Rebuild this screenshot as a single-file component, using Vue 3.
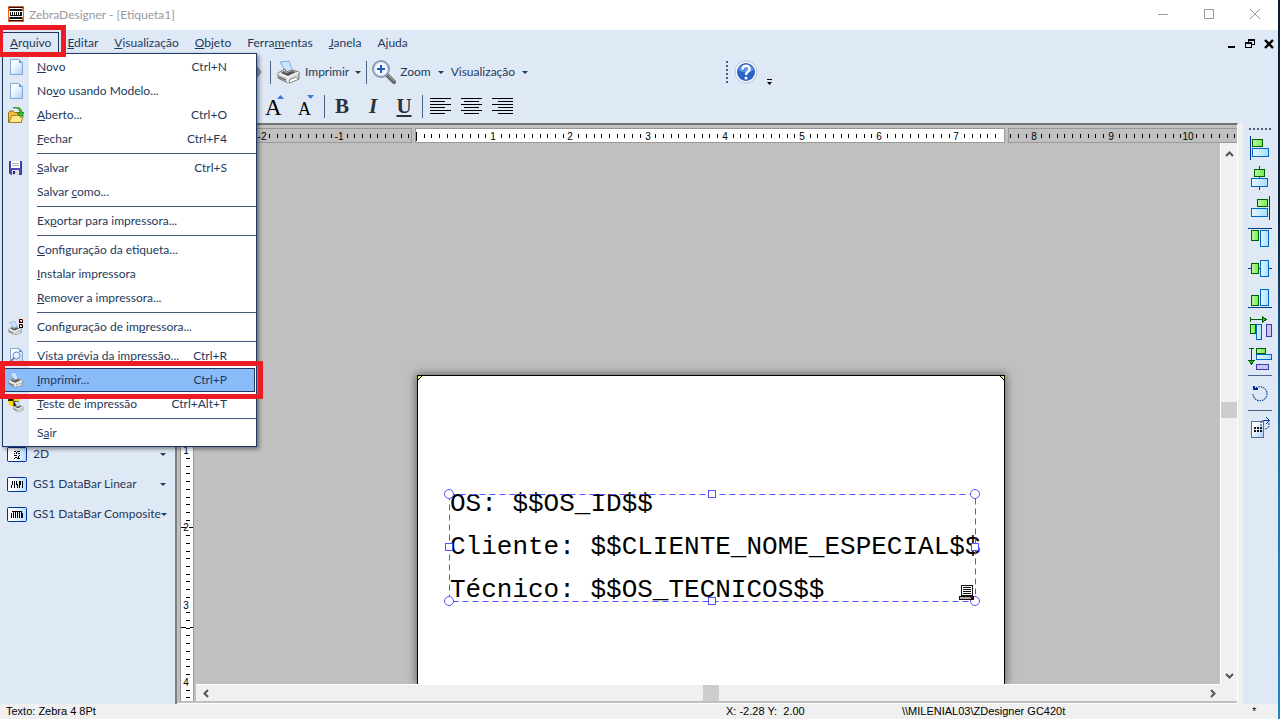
<script setup>
const split = (s) => {
  const i = s.indexOf('&')
  return i < 0 ? { a: s, k: '', b: '' } : { a: s.slice(0, i), k: s[i + 1], b: s.slice(i + 2) }
}
const menus = ['&Arquivo', '&Editar', '&Visualização', '&Objeto', 'Ferra&mentas', '&Janela', 'A&juda'].map(split)

const fileMenu = [
  [
    { t: '&Novo', s: 'Ctrl+N', icon: 'page' },
    { t: 'No&vo usando Modelo...', s: '', icon: 'page' },
    { t: '&Aberto...', s: 'Ctrl+O', icon: 'open' },
    { t: '&Fechar', s: 'Ctrl+F4' },
  ],
  [
    { t: '&Salvar', s: 'Ctrl+S', icon: 'save' },
    { t: 'Salvar &como...', s: '' },
  ],
  [{ t: 'Ex&portar para impressora...', s: '' }],
  [
    { t: '&Configuração da etiqueta...', s: '' },
    { t: '&Instalar impressora', s: '' },
    { t: '&Remover a impressora...', s: '' },
  ],
  [{ t: 'Configuração de im&pressora...', s: '', icon: 'setup' }],
  [
    { t: '&Vista prévia da impressão...', s: 'Ctrl+R', icon: 'preview' },
    { t: '&Imprimir...', s: 'Ctrl+P', icon: 'print', hot: true },
    { t: '&Teste de impressão', s: 'Ctrl+Alt+T', icon: 'test' },
  ],
  [{ t: 'S&air', s: '' }],
].map((g) => g.map((m) => ({ ...m, p: split(m.t) })))

const codes = [
  { t: '2D', icon: '2d' },
  { t: 'GS1 DataBar Linear', icon: 'linear' },
  { t: 'GS1 DataBar Composite', icon: 'comp' },
]

const STEP = 7.72
function ticks(origin, from, to) {
  const out = []
  for (let i = from; i <= to; i++) {
    out.push({ pos: Math.round(origin + i * STEP), n: i !== 0 && i % 10 === 0 ? i / 10 : null, i })
  }
  return out
}
const segments = [
  { cls: 'before', ticks: ticks(221, -28, -1) },
  { cls: 'sheet', ticks: ticks(0, 0, 75) },
  { cls: 'after', ticks: ticks(-593, 77, 106) },
]
const vTicks = ticks(230, 8, 42)

const aligners = [
  { name: 'Alinhar à esquerda', line: 'M2.5 0V24', g: [4, 3, 11, 8], b: [4, 12, 17, 9] },
  { name: 'Centralizar na horizontal', line: 'M11.5 0V24', g: [6, 3, 11, 8], b: [3, 12, 17, 9] },
  { name: 'Alinhar à direita', line: 'M21.5 0V24', g: [9, 3, 11, 8], b: [3, 12, 17, 9] },
  { name: 'Alinhar ao topo', line: 'M0 2.5H24', g: [3, 4, 8, 11], b: [12, 4, 9, 17] },
  { name: 'Centralizar na vertical', line: 'M0 12.5H24', g: [3, 7, 8, 11], b: [12, 4, 9, 17] },
  { name: 'Alinhar à base', line: 'M0 21.5H24', g: [3, 9, 8, 11], b: [12, 3, 9, 17] },
  { name: 'Distribuir na horizontal', arrow: 'M2.5 1V6M2 3.5H15', head: 'M14 0V7L18 3.5Z', g: [2, 8, 6, 10], b: [8, 8, 6, 16], v: [18, 8, 6, 13] },
  { name: 'Distribuir na vertical', arrow: 'M1 2.5H6M3.5 2V15', head: 'M0 14H7L3.5 18Z', g: [8, 2, 10, 6], b: [8, 8, 16, 6], v: [8, 18, 13, 6] },
]
const lines = ['OS: $$OS_ID$$', 'Cliente: $$CLIENTE_NOME_ESPECIAL$$', 'Técnico: $$OS_TECNICOS$$']
const printerPlacement = {
  print: 'scale(.667)',
  setup: 'translate(0 2) scale(.6)',
  test: 'translate(5 5) scale(.46)',
}
</script>

<template>
  <div class="screen">
    <svg class="defs" width="0" height="0">
      <defs>
        <linearGradient id="green"><stop stop-color="#c0f5a4" /><stop offset="1" stop-color="#72ef4c" /></linearGradient>
        <linearGradient id="blue"><stop stop-color="#e8f8ff" /><stop offset="1" stop-color="#a5dcff" /></linearGradient>
        <linearGradient id="codeFill"><stop offset=".3" stop-color="#fff" /><stop offset="1" stop-color="#b4dcff" /></linearGradient>
        <linearGradient id="sheetFill" x2="1" y2="1"><stop offset=".3" stop-color="#fbfdff" /><stop offset="1" stop-color="#a9cffa" /></linearGradient>
        <g id="printer">
          <path d="M3 2L12 1Q13 5 16 11L8 14Q7 6 3 2Z" fill="#cbe4ff" stroke="#7badea" />
          <path d="M1 13L8 9L9 12L15 10L22 12V19L11 23L1 18Z" fill="#dcdcdc" stroke="#707070" />
          <path d="M1 13L11 17L22 12M11 17V23" fill="none" stroke="#fff" />
          <path d="M4 13L11 16L19 12L15 11L9 13L7 11Z" fill="#555" />
          <path d="M12 20L19 17L22 19L13 23Z" fill="#fafafa" stroke="#888" />
          <path d="M2 16L9 19V21L2 18Z" fill="#777" />
        </g>
      </defs>
    </svg>
    <div class="window">
      <header class="titlebar">
        <svg class="app-icon" width="16" height="16" viewBox="0 0 16 16" shape-rendering="crispEdges">
          <path fill="#e8601c" d="M0 0h16v16H0z" /><path fill="#111" d="M1 1h14v1H1zM1 14h14v1H1zM2 3h12v10H2z" />
          <path fill="#fff" d="M2 2h12v1H2zM2 13h12v1H2zM1 5h14v6H1z" />
          <path fill="#111" d="M2 6h1v3H2zM4 6h1v3H4zM6 6h1v3H6zM8 6h1v3H8zM10 6h1v3h-1zM12 6h2v3h-2zM2 9h12v1H2z" />
        </svg>
        <h1 class="title">ZebraDesigner - [Etiqueta1]</h1>
        <div class="win-buttons">
          <button aria-label="Minimizar"><svg width="12" height="12"><path d="M1 6.500H11" /></svg></button>
          <button aria-label="Maximizar"><svg width="12" height="12"><path d="M1.500 1.500h9v9h-9z" /></svg></button>
          <button aria-label="Fechar"><svg width="12" height="12"><path d="M1 1L11 11M11 1L1 11" /></svg></button>
        </div>
      </header>

      <nav class="menubar">
        <button v-for="(m, i) in menus" :key="i" class="menu-button" :class="{ active: i === 0 }">{{ m.a }}<u>{{ m.k }}</u>{{ m.b }}</button>
        <div class="doc-buttons">
          <button aria-label="Minimizar documento"><svg width="8" height="10"><path d="M0 7h7v2H0z" fill="#000" /></svg></button>
          <button aria-label="Restaurar documento">
            <svg width="10" height="10" shape-rendering="crispEdges" fill="none" stroke="#000"><path d="M3 1.500h6M3.500 1v3M9.500 0v6M7 5.500h3M3 .5h7M0 4.500h7M.5 4v5M6.500 4v5M0 8.500h7M0 3.500h7" /></svg>
          </button>
          <button aria-label="Fechar documento"><svg width="10" height="10"><path d="M1 1L9 9M9 1L1 9" stroke="#000" stroke-width="2.400" /></svg></button>
        </div>
      </nav>

      <div class="toolbars">
        <div class="toolbar main-bar">
          <svg class="edge" width="5" height="12"><path d="M0 0L5 6L0 12Z" fill="#9a9a9a" /></svg>
          <span class="bar-sep"></span>
          <button class="tool print-tool">
            <svg width="24" height="24" viewBox="0 0 24 24"><use href="#printer" /></svg>
            <span>Imprimir</span>
          </button>
          <button class="drop" aria-label="Opções de impressão"></button>
          <span class="bar-sep"></span>
          <button class="tool zoom-tool">
            <svg width="24" height="24" viewBox="0 0 24 24">
              <path d="M15 15L22 22" stroke="#686868" stroke-width="4" stroke-linecap="round" /><path d="M16 15L22 21" stroke="#b0a8a8" />
              <circle cx="9" cy="9" r="8" fill="#deedff" stroke="#8c9bb0" stroke-width="2" /><circle cx="9" cy="9" r="6" fill="#f3f8ff" />
              <path d="M9 5V13M5 9H13" stroke="#2458c8" stroke-width="2" />
            </svg>
            <span>Zoom</span>
          </button>
          <button class="drop" aria-label="Opções de zoom"></button>
          <button class="tool view-tool"><span>Visualização</span></button>
          <button class="drop" aria-label="Opções de visualização"></button>
          <span class="grip"></span>
          <button class="tool help-tool" aria-label="Ajuda">
            <svg width="24" height="24" viewBox="0 0 24 24">
              <circle cx="12" cy="12" r="11" fill="#f7f9fd" stroke="#b8c6dc" /><circle cx="12" cy="12" r="9" fill="#2b62c8" />
              <path d="M4 10A9 9 0 0 1 20 10Q12 15 4 10Z" fill="#5a93e6" />
              <path d="M8.500 9.500C8.500 4.500 15.500 4.500 15.500 9C15.500 12 12 11.500 12 15" fill="none" stroke="#fff" stroke-width="2.500" /><circle cx="12" cy="18" r="1.500" fill="#fff" />
            </svg>
          </button>
          <svg class="overflow" width="6" height="6"><path d="M0 0h5v1H0zM0 3h5L2.500 6Z" fill="#000" /></svg>
        </div>

        <div class="toolbar format-bar">
          <button class="tool" aria-label="Aumentar fonte">
            <svg width="28" height="30"><text x="0" y="24" class="serif" font-size="23">A</text><path d="M12 8L15.500 4L19 8Z" fill="#3d78dc" /></svg>
          </button>
          <button class="tool" aria-label="Diminuir fonte">
            <svg width="28" height="30"><text x="2" y="24" class="serif" font-size="18">A</text><path d="M11 4H18L14.500 8Z" fill="#3d78dc" /></svg>
          </button>
          <span class="bar-sep"></span>
          <button class="tool letter b">B</button>
          <button class="tool letter i">I</button>
          <button class="tool letter u">U</button>
          <span class="bar-sep"></span>
          <button class="tool para" aria-label="Alinhar à esquerda"><svg width="22" height="18"><path d="M0 1.500H21M0 4.500H15M0 7.500H21M0 10.500H15M0 13.500H21M0 16.500H15" /></svg></button>
          <button class="tool para" aria-label="Centralizar"><svg width="22" height="18"><path d="M0 1.500H21M3 4.500H18M0 7.500H21M3 10.500H18M0 13.500H21M3 16.500H18" /></svg></button>
          <button class="tool para" aria-label="Alinhar à direita"><svg width="22" height="18"><path d="M0 1.500H21M6 4.500H21M0 7.500H21M6 10.500H21M0 13.500H21M6 16.500H21" /></svg></button>
        </div>
      </div>

      <main class="body">
        <aside class="codes">
          <button v-for="c in codes" :key="c.t" class="code">
            <svg width="20" height="16" viewBox="0 0 20 16">
              <rect x=".5" y="1.500" width="19" height="14" rx="1" fill="url(#codeFill)" stroke="#003399" />
              <g shape-rendering="crispEdges">
                <path v-if="c.icon === '2d'" d="M7 5h2v1H7zM10 5h3v1h-3zM7 7h1v1H7zM9 6h1v2H9zM11 7h2v1h-2zM7 9h3v1H7zM12 9h1v1h-1zM8 11h2v1H8zM11 10h1v2h-1zM7 12h1v1H7zM10 12h3v1h-3z" fill="#000" />
                <path v-else-if="c.icon === 'linear'" d="M4.500 12V9M5.500 9V5M7.500 12V5M9.500 9V5M10.500 12V8M12.500 12V5M13.500 9V5M15.500 12V5" stroke="#000" />
                <path v-else d="M4.500 12V7M6.500 12V5M8.500 12V5M10.500 12V5M12.500 12V5M14.500 12V5M15.500 7V12M5 5.500H15" stroke="#000" />
              </g>
            </svg>
            <span>{{ c.t }}</span><i class="caret"></i>
          </button>
        </aside>

        <section class="editor">
          <div class="hruler">
            <svg v-for="s in segments" :key="s.cls" class="seg" :class="s.cls" height="15" shape-rendering="crispEdges">
              <template v-for="t in s.ticks" :key="t.i">
                <text v-if="t.n !== null" :x="t.pos" y="11" text-anchor="middle">{{ t.n }}</text>
                <rect v-else :x="t.pos" :y="t.i === 0 ? 3 : 5" width="1" :height="t.i === 0 ? 9 : 4" />
              </template>
            </svg>
          </div>
          <div class="stage">
            <svg class="vruler" width="14" shape-rendering="crispEdges">
              <template v-for="t in vTicks" :key="t.i">
                <text v-if="t.n !== null" x="5" :y="t.pos + 4" text-anchor="middle">{{ t.n }}</text>
                <rect v-else x="5" :y="t.pos" width="4" height="1" />
              </template>
              <path d="M0 384.500H5M8 384.500H13M0 484.500H5M9 484.500H13" stroke="#000" />
            </svg>
            <div class="scroller">
              <div class="desk">
                <div class="label">
                  <svg class="corner left" width="4" height="4"><path d="M0 0H4L0 4Z" fill="#e9e66a" /><path d="M0 4L4 0" stroke="#000" /></svg>
                  <svg class="corner right" width="4" height="4"><path d="M4 0H0L4 4Z" fill="#e9e66a" /><path d="M0 0L4 4" stroke="#000" /></svg>
                  <div class="label-text"><p v-for="l in lines" :key="l">{{ l }}</p></div>
                  <svg class="selection" width="536" height="118" fill="#fff" stroke="#5353ff">
                    <rect x="5.500" y="5.500" width="526" height="107" fill="none" stroke-dasharray="6 4" />
                    <circle cx="5" cy="5" r="4.500" /><circle cx="531" cy="5" r="4.500" /><circle cx="5" cy="112" r="4.500" />
                    <rect x="264.500" y="1.500" width="7" height="7" /><rect x="264.500" y="108.500" width="7" height="7" />
                    <rect x="1.500" y="54.500" width="7" height="7" /><rect x="527.500" y="54.500" width="7" height="7" />
                    <circle cx="531" cy="112" r="4.500" />
                    <g shape-rendering="crispEdges" stroke="none">
                      <path d="M517 96h12v11h-12zM515 107h15v4h-15z" fill="#111" /><path d="M518 97h10v9h-10z" />
                      <path d="M519 98h8v1h-8zM519 100h8v1h-8zM519 102h8v1h-8zM519 104h8v1h-8z" fill="#111" /><path d="M516 108h11v2h-11z" fill="#b0b0b0" /><path d="M526 108h2v1h-2z" fill="#f00" />
                    </g>
                  </svg>
                </div>
              </div>
              <div class="vscroll">
                <svg width="9" height="6"><path d="M1 5L4.500 1.500L8 5" /></svg><i class="thumb"></i><svg width="9" height="6"><path d="M1 1L4.500 4.500L8 1" /></svg>
              </div>
              <div class="hscroll">
                <svg width="6" height="9"><path d="M5 1L1.500 4.500L5 8" /></svg><i class="thumb"></i><svg width="6" height="9"><path d="M1 1L4.500 4.500L1 8" /></svg>
              </div>
            </div>
          </div>
        </section>

        <aside class="align-bar">
          <span class="hgrip"></span>
          <button v-for="a in aligners" :key="a.name" :aria-label="a.name">
            <svg width="24" height="24" shape-rendering="crispEdges">
              <path v-if="a.line" :d="a.line" stroke="#003399" />
              <g v-else><path :d="a.arrow" stroke="#006000" /><path :d="a.head" fill="#34b41e" stroke="#006000" /></g>
              <rect :x="a.g[0] + .5" :y="a.g[1] + .5" :width="a.g[2] - 1" :height="a.g[3] - 1" fill="url(#green)" stroke="#006000" />
              <rect :x="a.b[0] + .5" :y="a.b[1] + .5" :width="a.b[2] - 1" :height="a.b[3] - 1" fill="url(#blue)" stroke="#0066cc" />
              <rect v-if="a.v" :x="a.v[0] + .5" :y="a.v[1] + .5" :width="a.v[2] - 1" :height="a.v[3] - 1" fill="#c8c4f4" stroke="#4038a8" />
            </svg>
          </button>
          <hr />
          <button aria-label="Girar">
            <svg width="24" height="24"><path d="M8 7A7 7 0 1 1 5 13" fill="none" stroke="#003399" stroke-width="1.200" stroke-dasharray="1.500 1" /><path d="M5 5H7V7H10V9H5Z" fill="#003399" /></svg>
          </button>
          <hr />
          <button aria-label="Girar etiqueta">
            <svg width="24" height="24"><rect x="3.500" y="5.500" width="12" height="16" fill="url(#sheetFill)" stroke="#5a6f9a" /><path d="M6 11h2v2H6zM9 11h2v2H9zM12 11h2v2h-2zM6 14h2v2H6zM9 14h2v2H9zM12 14h2v2h-2z" fill="#111" /><path d="M13 10V6Q14 4.500 17 4.500M21 7V10Q20 13 16 13" fill="none" stroke="#003399" stroke-dasharray="2 1" /><path d="M18 1L21.500 4.500L18 8M16 4.500H21" fill="none" stroke="#003399" /></svg>
          </button>
        </aside>
      </main>

      <footer class="status">
        <span class="st-font">Texto: Zebra 4 8Pt</span><span>X: -2.28 Y:&nbsp; 2.00</span><span>\\MILENIAL03\ZDesigner GC420t</span><span>*</span>
      </footer>

      <div class="popup" role="menu">
        <template v-for="(g, gi) in fileMenu" :key="gi">
          <hr v-if="gi" />
          <button v-for="m in g" :key="m.t" class="item" :class="{ hot: m.hot }" role="menuitem">
            <svg width="16" height="16" viewBox="0 0 16 16">
              <g v-if="m.icon === 'page' || m.icon === 'preview'">
                <path d="M2.500 .5H11L14.500 4V15.500H2.500Z" fill="url(#sheetFill)" stroke="#7fa8de" /><path d="M11 .5V4H14.500Z" fill="#5a9be8" />
              </g>
              <g v-if="m.icon === 'preview'"><circle cx="8.500" cy="7.500" r="3.500" fill="#e6f2ff" stroke="#6d87b4" /><path d="M6 10L2 14" stroke="#6d87b4" stroke-width="2" /></g>
              <g v-if="m.icon === 'open'">
                <path d="M.5 15.500V5.500L2 4H5L6.500 5.500H13.500V15.500Z" fill="#f0bf3b" stroke="#9c7414" /><path d="M1 15.500L4 8.500H15.500L13 15.500Z" fill="#ffe890" stroke="#a98018" />
                <path d="M5 1C10 0 12 3 12 6H9L13 10.500L16 5.500H14C14 1 9-1 5 1Z" fill="#36bc25" stroke="#147813" stroke-width=".7" />
              </g>
              <g v-if="m.icon === 'save'"><path d="M1.500 1.500H13.500V14.500H3L1.500 13Z" fill="#5148c0" stroke="#39309b" /><path d="M3 1H12V8H3Z" fill="#fff" /><path d="M4 3.500H11M4 5.500H11" stroke="#b8b8b8" /><path d="M4 10H11V15H4Z" fill="#ddd" /><path d="M5 11H7V14H5Z" fill="#25207b" /></g>
              <g v-if="m.icon === 'test'"><circle cx="5.500" cy="5" r="5.500" fill="#ffd500" /><path d="M5.500 5V-.5A5.500 5.500 0 0 0 0 5ZM5.500 5V10.500A5.500 5.500 0 0 0 11 5Z" fill="#111" /></g>
              <use v-if="printerPlacement[m.icon]" href="#printer" :transform="printerPlacement[m.icon]" />
              <g v-if="m.icon === 'setup'" shape-rendering="crispEdges"><path d="M10 0h6v9h-6z" fill="#eef" /><path d="M11.500 .5h3v3h-3zM11.500 5.500h3v3h-3z" fill="#fff" stroke="#000" /><path d="M12 2h1v1h-1zM13 6h1v1h-1zM14 0h1v1h-1zM14 5h1v1h-1z" fill="#f20" /></g>
            </svg>
            <span class="caption">{{ m.p.a }}<u>{{ m.p.k }}</u>{{ m.p.b }}</span><kbd>{{ m.s }}</kbd>
          </button>
        </template>
      </div>
      <div class="mark mark-menu"></div>
      <div class="mark mark-print"></div>
    </div>
    <div class="desktop"></div>
  </div>
</template>

<style>
body { margin: 0; background: #fff; }
</style>

<style scoped>
* { box-sizing: border-box; }
button { font: inherit; color: inherit; background: none; border: 0; padding: 0; margin: 0; }
svg { flex: none; display: block; }
.screen { display: flex; height: 100vh; min-height: 600px; padding-right: 4px; font: 12px/16px Lato, "Open Sans", sans-serif; color: #1e395b; }
.defs { position: absolute; }
.window { flex: 1; min-width: 0; display: flex; flex-direction: column; position: relative; background: #dfe9f5; }
.desktop { width: 2px; background: linear-gradient(#0b1c30, #0c2038 30%, #144a78 45%, #1d78b4 70%, #1d86c6); }

.titlebar { flex: none; height: 30px; background: #fff; display: flex; align-items: center; padding-left: 8px; }
.app-icon { margin-bottom: 2px; }
.title { flex: 1; margin: 0 0 0 5px; font-size: 12px; line-height: 16px; font-weight: 400; color: #999; }
.win-buttons { display: flex; }
.win-buttons button { width: 46px; height: 30px; display: grid; place-items: center; }
.win-buttons svg { fill: none; stroke: #999; margin-bottom: 2px; }

.menubar { flex: none; height: 25px; display: flex; align-items: stretch; padding: 2px 4px 0 2px; }
.menu-button { padding: 0 8px 2px; border: 1px solid transparent; border-width: 1px 0 0; white-space: nowrap; }
.menu-button.active { border-color: #1e395b; border-width: 1px 1px 0 0; padding-right: 7px; }
.doc-buttons { margin-left: auto; display: flex; align-items: center; gap: 9px; }

.toolbars { flex: none; padding-left: 257px; }
.toolbar { height: 34px; display: flex; align-items: center; }
.tool { display: flex; align-items: center; gap: 4px; white-space: nowrap; }
.bar-sep { width: 1px; height: 23px; background: #4a648c; flex: none; }
.edge { margin-right: 8px; }
.print-tool { margin-left: 6px; }
.drop { width: 14px; height: 22px; display: grid; place-items: center; }
.drop::before, .caret { content: ""; width: 0; height: 0; border: 3px solid transparent; border-top-color: #1e395b; border-bottom: 0; }
.print-tool + .drop { margin: 0 1px 0 2px; }
.zoom-tool { margin-left: 5px; }
.zoom-tool + .drop { margin-left: 3px; }
.view-tool { margin-left: 3px; }
.view-tool + .drop { margin-left: 3px; }
.grip { width: 2px; height: 23px; margin-left: 194px; background: repeating-linear-gradient(#4a5f7c 0 2px, transparent 2px 4px); }
.help-tool { margin-left: 6px; }
.overflow { margin: 20px 0 0 9px; }
.format-bar { padding-left: 8px; }
.serif, .letter { font-family: "Liberation Serif", serif; }
.format-bar .tool + .tool { margin-left: 3px; }
.letter { width: 28px; height: 24px; justify-content: center; font-size: 21px; font-weight: 700; color: #2c3038; }
.letter.b { margin-left: 3px; }
.letter.i { font-style: italic; }
.letter.u { text-decoration: underline; }
.letter + .bar-sep { margin-left: 4px; }
.para { width: 28px; justify-content: center; margin-left: 4px; }
.para svg { stroke: #000; }

.body { flex: 1; min-height: 0; display: flex; }
.codes { width: 175px; flex: none; padding-top: 316px; }
.code { width: 100%; height: 30px; display: flex; align-items: center; padding: 0 9px 0 7px; gap: 6px; white-space: nowrap; }
.code span { flex: 1; text-align: left; }
.code .caret { margin-left: -6px; }

.editor { flex: 1; min-width: 0; display: flex; flex-direction: column; background: #c0c0c0; border: solid #808080; border-width: 2px 1px 0 2px; border-top-color: #747474; border-right-color: #fff; }
.hruler { flex: none; display: flex; gap: 3px; margin: 3px 0 0 17px; }
.seg { border: 1px solid #999; }
.seg, .vruler { font: 10px "Liberation Sans", sans-serif; fill: #000; }
.seg.before { width: 218px; }
.seg.sheet { width: 590px; background: #fff; }
.seg.after { flex: 1; width: 0; border-right: 0; }
.stage { flex: 1; min-height: 0; display: flex; padding: 0 0 2px 3px; border-bottom: 1px solid #fff; }
.vruler { height: 100%; background: #fff; border: solid #999; border-width: 0 1px; }
.scroller { flex: 1; min-width: 0; margin-left: 2px; display: grid; grid-template: 1fr 17px / 1fr 17px; background: #f0f0f0; }
.desk { min-width: 0; min-height: 0; background: #c0c0c0; overflow: hidden; padding: 232px 0 0 221px; }
.label { position: relative; width: 588px; height: 100%; background: #fff; border: 1px solid #000; border-bottom: 0; box-shadow: 0 0 9px 1px #606060; }
.corner { position: absolute; top: 0; }
.corner.left { left: 0; }
.corner.right { right: 0; }
.label-text { position: absolute; left: 32px; top: 107px; color: #000; font: 26px/43px "Liberation Mono", monospace; white-space: nowrap; }
.label-text p { margin: 0; }
.selection { position: absolute; left: 26px; top: 113px; }
.vscroll, .hscroll { display: flex; align-items: center; justify-content: space-between; }
.vscroll { flex-direction: column; padding: 8px 0 5px; border-left: 1px solid #fff; }
.hscroll { padding: 0 4px 0 7px; border-top: 1px solid #fff; }
.vscroll svg, .hscroll svg { fill: none; stroke: #555; stroke-width: 2; }
.thumb { width: 16px; height: 16px; background: #cdcdcd; }
.hscroll .thumb { margin-left: 3px; }
.vscroll .thumb { margin-bottom: 10px; }

.align-bar { flex: none; width: 40px; border-left: 5px solid #f0f0f0; display: flex; flex-direction: column; align-items: flex-start; padding: 5px 0 0 2px; }
.align-bar button { width: 30px; height: 30px; flex: none; display: grid; place-items: center; }
.align-bar hr { width: 24px; height: 1px; border: 0; margin: 2px 3px; background: #4a648c; }
.hgrip { flex: none; height: 2px; width: 22px; margin: 0 4px 3px; background: repeating-linear-gradient(90deg, #4a5f7c 0 2px, transparent 2px 4px); }

.status { flex: none; height: 15px; display: grid; grid-template-columns: 726px 176px 1fr 26px; background: #f0f0f0; color: #000; font: 11px/14px "Liberation Sans", sans-serif; white-space: nowrap; }
.st-font { padding-left: 6px; }

.popup { position: absolute; left: 2px; top: 53px; width: 255px; padding: 1px 0; border: 1px solid #1e3966; background: linear-gradient(90deg, #dfe9f5 26px, #fff 26px); box-shadow: 2px 2px 4px rgba(0, 0, 0, .45); }
.popup hr { height: 1px; margin: 2px 0 2px 34px; border: 0; background: #42597c; }
.item { width: 100%; height: 24px; display: flex; align-items: center; padding: 0 29px 0 5px; white-space: nowrap; }
.item.hot { background: #8bbcfa; border: 1px solid #1e3966; width: 252px; padding: 0 27px 0 4px; }
.caption { flex: 1; text-align: left; padding-left: 13px; }
kbd { font: inherit; }
.mark { position: absolute; border: 5px solid #ed1c24; }
.mark-menu { left: 0; top: 25px; width: 66px; height: 32px; border-left-width: 3px; }
.mark-print { left: 0; top: 361px; width: 263px; height: 38px; }
</style>
